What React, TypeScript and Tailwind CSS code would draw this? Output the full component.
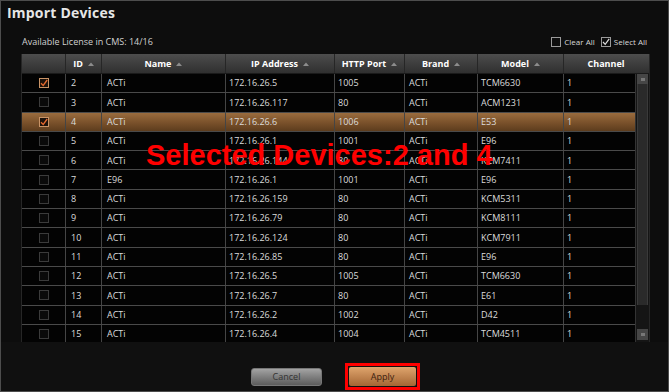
import React from 'react';

type Row = {
  id: number;
  name: string;
  ip: string;
  port: string;
  brand: string;
  model: string;
  channel: string;
  checked?: boolean;
  selected?: boolean;
};

const rows: Row[] = [
  { id: 2, name: 'ACTi', ip: '172.16.26.5', port: '1005', brand: 'ACTi', model: 'TCM6630', channel: '1', checked: true },
  { id: 3, name: 'ACTi', ip: '172.16.26.117', port: '80', brand: 'ACTi', model: 'ACM1231', channel: '1' },
  { id: 4, name: 'ACTi', ip: '172.16.26.6', port: '1006', brand: 'ACTi', model: 'E53', channel: '1', checked: true, selected: true },
  { id: 5, name: 'ACTi', ip: '172.16.26.1', port: '1001', brand: 'ACTi', model: 'E96', channel: '1' },
  { id: 6, name: 'ACTi', ip: '172.16.26.144', port: '80', brand: 'ACTi', model: 'KCM7411', channel: '1' },
  { id: 7, name: 'E96', ip: '172.16.26.1', port: '1001', brand: 'ACTi', model: 'E96', channel: '1' },
  { id: 8, name: 'ACTi', ip: '172.16.26.159', port: '80', brand: 'ACTi', model: 'KCM5311', channel: '1' },
  { id: 9, name: 'ACTi', ip: '172.16.26.79', port: '80', brand: 'ACTi', model: 'KCM8111', channel: '1' },
  { id: 10, name: 'ACTi', ip: '172.16.26.124', port: '80', brand: 'ACTi', model: 'KCM7911', channel: '1' },
  { id: 11, name: 'ACTi', ip: '172.16.26.85', port: '80', brand: 'ACTi', model: 'E96', channel: '1' },
  { id: 12, name: 'ACTi', ip: '172.16.26.5', port: '1005', brand: 'ACTi', model: 'TCM6630', channel: '1' },
  { id: 13, name: 'ACTi', ip: '172.16.26.7', port: '80', brand: 'ACTi', model: 'E61', channel: '1' },
  { id: 14, name: 'ACTi', ip: '172.16.26.2', port: '1002', brand: 'ACTi', model: 'D42', channel: '1' },
  { id: 15, name: 'ACTi', ip: '172.16.26.4', port: '1004', brand: 'ACTi', model: 'TCM4511', channel: '1' },
];

const SortArrow = () => (
  <svg width="6" height="4" viewBox="0 0 6 4" className="ml-[5px]">
    <path d="M0 4 L3 0.5 L6 4 Z" fill="#8c8c8c" />
  </svg>
);

const RowCheck = ({ checked }: { checked?: boolean }) =>
  checked ? (
    <div className="w-[10px] h-[10px] border border-[#c99467] bg-[#1c120b] flex items-center justify-center">
      <svg width="8" height="8" viewBox="0 0 8 8">
        <path d="M1 4.2 L3.2 6.4 L7.2 1" stroke="#e4692e" strokeWidth="1.3" fill="none" />
      </svg>
    </div>
  ) : (
    <div className="w-[10px] h-[10px] border border-[#3b3b3b] bg-[#0a0a0a]" />
  );

const cols = 'grid grid-cols-[44px_36px_124px_109px_70px_73px_86px_71px]';

const App = () => {
  return (
    <div
      className="relative w-[669px] h-[392px] overflow-hidden bg-[#0d0d0d] border border-[#4d4d4d] flex flex-col text-[#dcdcdc]"
      style={{ fontFamily: '"Open Sans", "Noto Sans", sans-serif' }}
    >
      {/* title */}
      <div className="h-[25px] pl-[6px] pt-[5px] text-[14px] leading-none font-bold text-[#e6e6e6] tracking-[0.2px]">
        Import Devices
      </div>

      {/* license + select controls */}
      <div className="h-[28px] pt-[11px] pl-[21px] pr-[21px] flex items-start justify-between">
        <div className="h-[10px] flex items-center text-[9px] text-[#d0d0d0]">Available License in CMS: 14/16</div>
        <div className="flex items-center h-[10px] text-[8px] text-[#d8d8d8]">
          <div className="w-[10px] h-[10px] border border-[#9a9a9a]" />
          <span className="ml-[3px]">Clear All</span>
          <div className="ml-[6px] w-[10px] h-[10px] border border-[#9a9a9a] flex items-center justify-center">
            <svg width="8" height="8" viewBox="0 0 8 8">
              <path d="M1 4 L3.2 6.3 L7.2 0.8" stroke="#e0e0e0" strokeWidth="1.2" fill="none" />
            </svg>
          </div>
          <span className="ml-[3px]">Select All</span>
        </div>
      </div>

      {/* table */}
      <div className="ml-[20px] w-[629px] h-[288px] border-l border-r border-[#262626] flex flex-col">
        <div className="h-[20px] flex bg-gradient-to-b from-[#4d4d4d] to-[#303030] border-b border-[#1a1a1a] text-[9px] font-bold text-white">
          {[
            { w: 'w-[44px]', label: '', arrow: false },
            { w: 'w-[36px]', label: 'ID', arrow: true },
            { w: 'w-[124px]', label: 'Name', arrow: true },
            { w: 'w-[109px]', label: 'IP Address', arrow: true },
            { w: 'w-[70px]', label: 'HTTP Port', arrow: true },
            { w: 'w-[73px]', label: 'Brand', arrow: true },
            { w: 'w-[86px]', label: 'Model', arrow: true },
            { w: 'w-[84px]', label: 'Channel', arrow: false },
          ].map((c, i) => (
            <div
              key={i}
              className={`${c.w} flex items-center justify-center ${i < 7 ? 'border-r border-[#262626]' : ''}`}
            >
              {c.label}
              {c.arrow && <SortArrow />}
            </div>
          ))}
        </div>

        <div className="flex h-[268px]">
          <div className="w-[613px] overflow-hidden bg-[#030303]">
            {rows.map((r) => (
              <div
                key={r.id}
                className={`${cols} h-[19.3px] border-b border-[#4a4a4a] text-[9px] ${
                  r.selected ? 'bg-gradient-to-b from-[#9a6c3e] via-[#7c532c] to-[#5d3c1d]' : ''
                }`}
              >
                <div className="flex items-center justify-center border-r border-[#454545]">
                  <RowCheck checked={r.checked} />
                </div>
                <div className="flex items-center pl-[5px] border-r border-[#454545]">{r.id}</div>
                <div className="flex items-center pl-[5px] border-r border-[#454545]">{r.name}</div>
                <div className="flex items-center pl-[3px] border-r border-[#454545]">{r.ip}</div>
                <div className="flex items-center pl-[3px] border-r border-[#454545]">{r.port}</div>
                <div className="flex items-center pl-[4px] border-r border-[#454545]">{r.brand}</div>
                <div className="flex items-center pl-[3px] border-r border-[#454545]">{r.model}</div>
                <div className="flex items-center pl-[3px]">{r.channel}</div>
              </div>
            ))}
          </div>

          {/* scrollbar */}
          <div className="w-[14px] flex flex-col border-l border-[#333] bg-[#151515]">
            <div className="h-[10px] mx-[1px] bg-[#464646] flex items-center justify-center">
              <div className="w-[4px] h-[3px] bg-[#777]" />
            </div>
            <div className="h-[221px] mx-[1px] bg-[#2a2a2a] border-x border-[#3a3a3a]" />
            <div className="flex-1" />
            <div className="h-[11px] mx-[1px] mb-[2px] bg-[#464646] flex items-center justify-center">
              <div className="w-[4px] h-[3px] bg-[#777]" />
            </div>
          </div>
        </div>
      </div>

      {/* buttons */}
      <div className="flex-1 flex items-start justify-center pl-[2px] pt-[21px] gap-[23px] bg-[#101010]">
        <div className="mt-[5px] w-[71px] h-[18px] rounded-[3px] border border-[#777] bg-gradient-to-b from-[#a3a3a3] to-[#5c5c5c] flex items-center justify-center text-[9px] text-[#333]">
          Cancel
        </div>
        <div className="border-[3px] border-[#ff0000] p-[1px]">
          <div className="w-[67px] h-[19px] rounded-[2px] bg-gradient-to-b from-[#dfa56d] to-[#a46634] flex items-center justify-center text-[9px] text-[#3a2110]">
            Apply
          </div>
        </div>
      </div>

      {/* annotation overlay */}
      <div
        className="absolute left-[145px] top-[140px] text-[29px] leading-none font-bold text-[#ff0000] whitespace-nowrap"
        style={{ fontFamily: '"Liberation Sans", Arial, sans-serif' }}
      >
        Selected Devices:2 and 4
      </div>
    </div>
  );
};

export default App;
